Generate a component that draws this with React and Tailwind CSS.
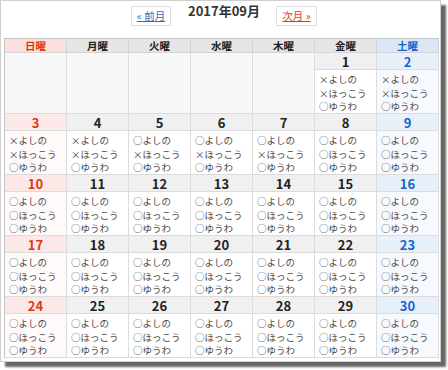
const DAYS = ['日曜', '月曜', '火曜', '水曜', '木曜', '金曜', '土曜']

// availability per day: [よしの, ほっこう, ゆうわ]
const avail = {
  1: ['×', '×', '○'],
  2: ['×', '×', '○'],
  3: ['×', '×', '○'],
  4: ['×', '×', '○'],
  5: ['○', '×', '○'],
  6: ['○', '×', '○'],
  7: ['○', '×', '○'],
}
const NAMES = ['よしの', 'ほっこう', 'ゆうわ']

const headBg = ['bg-[#fcdfdf]', 'bg-[#e6e6e6]', 'bg-[#e6e6e6]', 'bg-[#e6e6e6]', 'bg-[#e6e6e6]', 'bg-[#e6e6e6]', 'bg-[#dbe7f5]']
const headText = ['text-[#dd3a10]', 'text-[#222]', 'text-[#222]', 'text-[#222]', 'text-[#222]', 'text-[#222]', 'text-[#1466cc]']
const dateBg = ['bg-[#fde8e8]', 'bg-[#f0f0f0]', 'bg-[#f0f0f0]', 'bg-[#f0f0f0]', 'bg-[#f0f0f0]', 'bg-[#f0f0f0]', 'bg-[#e8f0fa]']
const bodyBg = ['bg-[#fffafa]', 'bg-white', 'bg-white', 'bg-white', 'bg-white', 'bg-white', 'bg-[#f6f9fe]']

function buildWeeks() {
  const cells = [null, null, null, null, null]
  for (let d = 1; d <= 30; d++) cells.push(d)
  const weeks = []
  for (let i = 0; i < cells.length; i += 7) weeks.push(cells.slice(i, i + 7))
  return weeks
}

function DayCell({ day, col }) {
  if (day === null) {
    return <div className="h-[61px] bg-[#f8f8f8] border-r border-b border-[#dcdcdc]" />
  }
  const marks = avail[day] || ['○', '○', '○']
  return (
    <div className="flex flex-col">
      <div className={`h-[17px] ${dateBg[col]} border-r border-b border-[#dcdcdc] flex items-center justify-center text-[13px] leading-[13px] font-bold ${headText[col]}`}>
        {day}
      </div>
      <div className={`h-[44px] ${bodyBg[col]} border-r border-b border-[#dcdcdc] pl-[4px] pt-[3px] text-[9.5px] leading-[13.5px] text-[#4a4a4a]`}>
        {NAMES.map((n, i) => (
          <div key={n}>{marks[i]}{n}</div>
        ))}
      </div>
    </div>
  )
}

export default function App() {
  const weeks = buildWeeks()
  return (
    <div className="w-[448px] h-[370px] bg-white" style={{ fontFamily: '"Noto Sans CJK JP", "Noto Sans", sans-serif' }}>
      <div className="w-[441px] h-[362px] border border-[#cfcfcf] bg-white shadow-[5px_5px_2px_rgba(0,0,0,0.6)]">
        {/* month nav */}
        <div className="h-[37px] flex items-start pl-[130px]">
          <a className="mt-[5px] h-[20px] w-[40px] border border-[#dedede] flex items-center justify-center text-[10.5px] leading-[14px] text-[#2f6db5] underline">
            « 前月
          </a>
          <div className="ml-[17px] mt-[1px] text-[13px] font-bold text-[#333] leading-[18px]">2017年09月</div>
          <a className="ml-[16px] mt-[5px] h-[20px] w-[41px] border border-[#dedede] flex items-center justify-center text-[10.5px] leading-[14px] text-[#e03535] underline">
            次月 »
          </a>
        </div>

        {/* calendar */}
        <div className="ml-[3px] w-[435px] border-t border-l border-[#c4c4c4]">
          <div className="grid grid-cols-[repeat(7,62px)]">
            {DAYS.map((d, i) => (
              <div key={d} className={`h-[14px] ${headBg[i]} ${headText[i]} border-r border-b border-[#d4d4d4] flex items-center justify-center text-[10.5px] leading-[11px] font-bold`}>
                {d}
              </div>
            ))}
          </div>
          {weeks.map((w, wi) => (
            <div key={wi} className="grid grid-cols-[repeat(7,62px)]">
              {w.map((day, ci) => (
                <DayCell key={ci} day={day} col={ci} />
              ))}
            </div>
          ))}
        </div>
      </div>
    </div>
  )
}
